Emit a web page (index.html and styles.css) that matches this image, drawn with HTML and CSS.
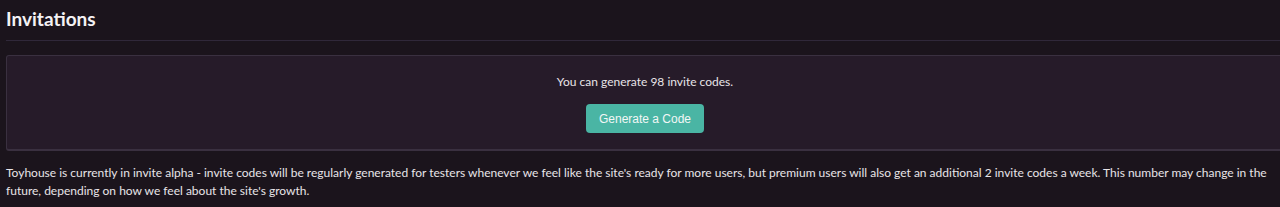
FILE: index.html
```html
<!DOCTYPE html>
<html lang="en">
<head>
    <meta charset="UTF-8">
    <meta name="viewport" content="width=device-width, initial-scale=1.0">
    <title>Invitations</title>
    <link rel="stylesheet" href="styles.css">
</head>
<body>
    <div class="page">
        <h1 class="title">Invitations</h1>
        <div class="invite-box">
            <p>You can generate 98 invite codes.</p>
            <button class="generate">Generate a Code</button>
        </div>
        <p class="info">Toyhouse is currently in invite alpha - invite codes will be regularly generated for testers whenever we feel like the site's ready for more users, but premium users will also get an additional 2 invite codes a week. This number may change in the future, depending on how we feel about the site's growth.</p>
    </div>
</body>
</html>
```

FILE: styles.css
```css
*{
    margin:0;
    padding:0;
    box-sizing: border-box;
}

html, body{
    overflow: hidden;
}

body{
    background-color: #1b141c;
    color: #e8e4e8;
    font-family: Lato, "Open Sans", sans-serif;
    font-size: 12px;
}

.page{
    width: 1284px;
    padding-left: 6px;
}

.title{
    font-size: 19px;
    font-weight: 700;
    color: #f4f2f4;
    line-height: 28px;
    padding-top: 5px;
    padding-bottom: 7px;
    border-bottom: 1px solid #30283a;
}

.invite-box{
    margin-top: 14px;
    background-color: #261b29;
    border: 1px solid #3a3040;
    border-bottom-width: 2px;
    border-radius: 3px;
    padding: 17px 0 16px;
    text-align: center;
}

.invite-box p{
    line-height: 18px;
    margin-bottom: 13px;
}

.generate{
    font-family: "Liberation Sans", Arial, sans-serif;
    font-size: 12px;
    color: #f2f7f6;
    background-color: #4ab5a4;
    border: none;
    border-radius: 4px;
    width: 118px;
    height: 29px;
    cursor: pointer;
}

.info{
    margin-top: 13px;
    line-height: 18px;
}
```
